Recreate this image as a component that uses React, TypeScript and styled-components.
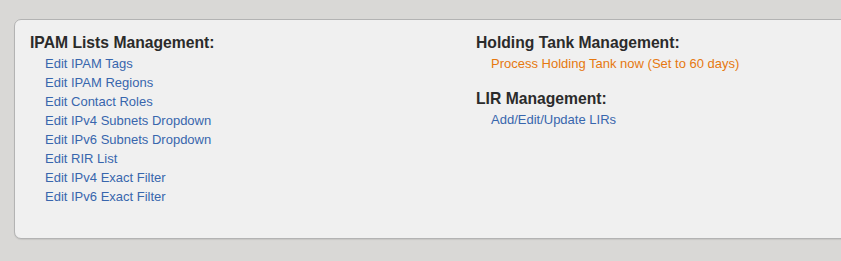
import React from 'react'
import styled, { createGlobalStyle } from 'styled-components'

const GlobalStyle = createGlobalStyle`
  html, body {
    margin: 0;
    padding: 0;
    background: #d9d8d6;
    font-family: "Liberation Sans", Arial, Helvetica, sans-serif;
  }
`

const Page = styled.div`
  padding: 19px 0 0 14px;
  height: 261px;
  box-sizing: border-box;
  overflow: hidden;
`

const Panel = styled.div`
  display: grid;
  grid-template-columns: 446px 1fr;
  height: 220px;
  width: 860px;
  box-sizing: border-box;
  padding: 13px 0 0 15px;
  background: #f0f0f0;
  border: 1px solid #b3b3b3;
  border-radius: 7px;
  box-shadow: 0 1px 1px rgba(0, 0, 0, 0.08);
`

const Column = styled.div`
  display: flex;
  flex-direction: column;
  gap: 16px;
`

const Section = styled.div`
  display: flex;
  flex-direction: column;
`

const Heading = styled.h3`
  margin: 0 0 1px;
  font-size: 15.7px;
  line-height: 20px;
  font-weight: bold;
  color: #2b2b2b;
`

const LinkList = styled.ul`
  list-style: none;
  margin: 0;
  padding: 0 0 0 15px;
`

const Link = styled.a<{ $warn?: boolean }>`
  display: block;
  font-size: 13px;
  line-height: 19px;
  color: ${props => (props.$warn ? '#e6780f' : '#3866ad')};
  text-decoration: none;
  cursor: pointer;
`

const ipamLinks = [
  'Edit IPAM Tags',
  'Edit IPAM Regions',
  'Edit Contact Roles',
  'Edit IPv4 Subnets Dropdown',
  'Edit IPv6 Subnets Dropdown',
  'Edit RIR List',
  'Edit IPv4 Exact Filter',
  'Edit IPv6 Exact Filter',
]

const App: React.FC = () => {
  return (
    <>
      <GlobalStyle />
      <Page>
        <Panel>
          <Column>
            <Section>
              <Heading>IPAM Lists Management:</Heading>
              <LinkList>
                {ipamLinks.map(label => (
                  <li key={label}>
                    <Link>{label}</Link>
                  </li>
                ))}
              </LinkList>
            </Section>
          </Column>
          <Column>
            <Section>
              <Heading>Holding Tank Management:</Heading>
              <LinkList>
                <li>
                  <Link $warn>Process Holding Tank now (Set to 60 days)</Link>
                </li>
              </LinkList>
            </Section>
            <Section>
              <Heading>LIR Management:</Heading>
              <LinkList>
                <li>
                  <Link>Add/Edit/Update LIRs</Link>
                </li>
              </LinkList>
            </Section>
          </Column>
        </Panel>
      </Page>
    </>
  )
}

export default App
